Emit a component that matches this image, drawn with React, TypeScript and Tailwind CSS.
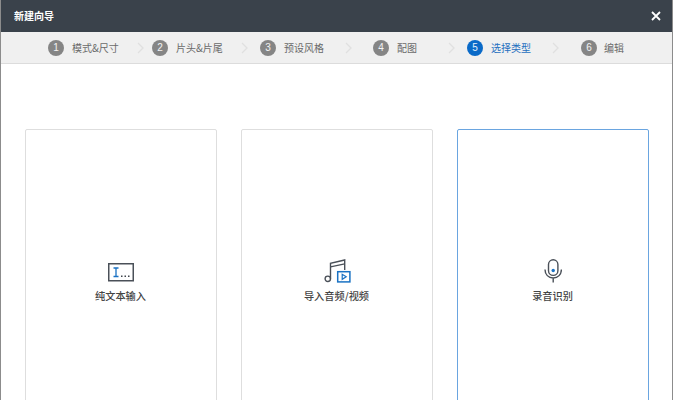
const font = { fontFamily: '"Noto Sans CJK SC", "Liberation Sans", sans-serif' };

const steps = [
  { n: 1, label: "模式&尺寸", w: "w-[89px]", gap: "mr-[8px]" },
  { n: 2, label: "片头&片尾", w: "w-[89px]", gap: "mr-[12px]" },
  { n: 3, label: "预设风格", w: "w-[85px]", gap: "mr-[21px]" },
  { n: 4, label: "配图", w: "w-[75px]", gap: "mr-[12px]" },
  { n: 5, label: "选择类型", w: "w-[85px]", gap: "mr-[22px]", active: true },
  { n: 6, label: "编辑", w: "w-[60px]", gap: "", last: true, tight: true },
];

function Chevron() {
  return (
    <svg width="7" height="12" viewBox="0 0 7 12" className="shrink-0">
      <path d="M1 1l5 5-5 5" fill="none" stroke="#e0e0e0" strokeWidth="1.3" />
    </svg>
  );
}

function TextIcon() {
  return (
    <svg width="26" height="19" viewBox="0 0 26 19" className="mb-[1px]">
      <rect x="0.75" y="0.75" width="24.5" height="17" fill="none" stroke="#4a5058" strokeWidth="1.5" />
      <path d="M5.5 5h5M8 5v8.5M5.5 13.5h5" fill="none" stroke="#1a72c4" strokeWidth="1.3" />
      <rect x="13" y="12.5" width="1.5" height="1.5" fill="#3f454c" />
      <rect x="16.5" y="12.5" width="1.5" height="1.5" fill="#3f454c" />
      <rect x="20" y="12.5" width="1.5" height="1.5" fill="#3f454c" />
    </svg>
  );
}

function MediaIcon() {
  return (
    <svg width="27" height="24" viewBox="0 0 27 24">
      <circle cx="3.8" cy="19.8" r="2.7" fill="none" stroke="#4a5058" strokeWidth="1.4" />
      <path d="M6.5 19.8V4.2L20.7 1v10" fill="none" stroke="#4a5058" strokeWidth="1.4" />
      <path d="M6.5 7.8l14.2-3" fill="none" stroke="#4a5058" strokeWidth="1.2" />
      <rect x="13.7" y="12.7" width="12.2" height="10.2" fill="#fff" stroke="#1a72c4" strokeWidth="1.5" />
      <path d="M18.2 15.3v5l4-2.5z" fill="none" stroke="#1a72c4" strokeWidth="1.2" />
    </svg>
  );
}

function MicIcon() {
  return (
    <svg width="18" height="24" viewBox="0 0 18 24">
      <rect x="4.5" y="0.8" width="9.4" height="15.6" rx="4.7" fill="none" stroke="#4a5058" strokeWidth="1.4" />
      <circle cx="9.2" cy="11.5" r="1.7" fill="#1a72c4" />
      <path d="M1 10.5c0 5 3.4 8.5 8.2 8.5s8.2-3.5 8.2-8.5M9.2 19v4.5" fill="none" stroke="#4a5058" strokeWidth="1.4" />
    </svg>
  );
}

function Card({ label, icon, active, gap }: { label: string; icon: React.ReactNode; active?: boolean; gap?: boolean }) {
  return (
    <div
      className={`w-[192px] h-[330px] shrink-0 rounded-[2px] border bg-white flex flex-col items-center pt-[128px] ${
        active ? "border-[#6aa5e0]" : "border-[#dedede]"
      } ${gap ? "mr-[24px]" : ""}`}
    >
      <div className="h-[25px] flex items-end justify-center">{icon}</div>
      <div className="mt-[6px] pr-[1px] text-[10.2px] font-medium leading-[14px] text-[#444444]">{label}</div>
    </div>
  );
}

export default function App() {
  return (
    <div style={font} className="w-[673px] h-[400px] overflow-hidden bg-white border-l border-r border-[#8c8c8c] flex flex-col">
      <div className="h-[32px] shrink-0 bg-[#3a424b] flex items-center justify-between pl-[13px] pr-[11px]">
        <span className="text-[10px] font-bold text-white leading-none">新建向导</span>
        <svg width="10" height="10" viewBox="0 0 10 10">
          <path d="M1 1l8 8M9 1l-8 8" stroke="#fff" strokeWidth="1.8" />
        </svg>
      </div>
      <div className="h-[32px] shrink-0 bg-[#f0f0f0] border-b border-[#dcdcdc] flex items-center pl-[47px]">
        {steps.map((s) => (
          <div key={s.n} className="flex items-center">
            <div className={`${s.w} flex items-center shrink-0`}>
              <span
                className={`w-[16px] h-[16px] rounded-full flex items-center justify-center text-[10px] leading-none text-white/90 shrink-0 ${
                  s.active ? "bg-[#0a6ac8]" : "bg-[#858585]"
                }`}
                style={{ fontFamily: '"Liberation Sans", sans-serif' }}
              >
                {s.n}
              </span>
              <span
                className={`${s.tight ? "ml-[7px]" : "ml-[8px]"} text-[10px] leading-none whitespace-nowrap ${
                  s.active ? "text-[#1f6fbf]" : "text-[#6a6a6a]"
                }`}
              >
                {s.label}
              </span>
            </div>
            {!s.last && (
              <div className={s.gap}>
                <Chevron />
              </div>
            )}
          </div>
        ))}
      </div>
      <div className="flex pl-[24px] pt-[65px]">
        <Card label="纯文本输入" icon={<TextIcon />} gap />
        <Card label="导入音频/视频" icon={<MediaIcon />} gap />
        <Card label="录音识别" icon={<MicIcon />} active />
      </div>
    </div>
  );
}
